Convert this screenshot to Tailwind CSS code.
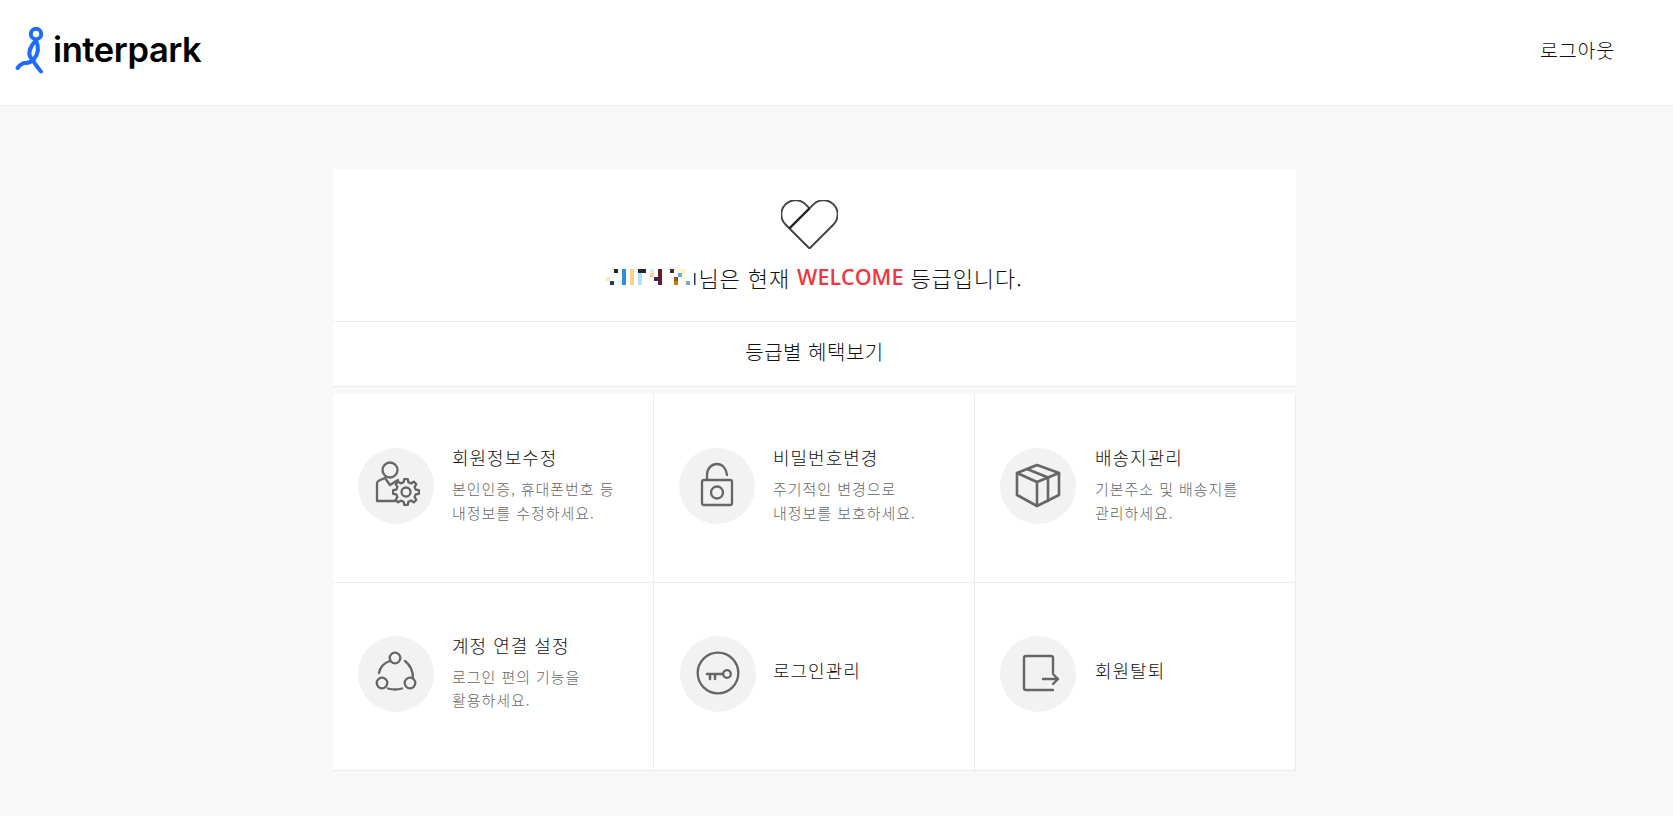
<!DOCTYPE html>
<html lang="ko"><head><meta charset="utf-8"><script src="https://cdn.jsdelivr.net/npm/@tailwindcss/browser@4"></script></head>
<body class="bg-[#f8f8f8] font-['Noto_Sans_CJK_KR','Noto_Sans',sans-serif] font-light text-[#111] overflow-hidden">
<div class="h-[816px] flex flex-col">
<header class="h-[106px] shrink-0 bg-white border-b border-[#ececec] flex items-center justify-between pl-[14px] pr-[58px]">
  <div class="flex items-center h-[60px] -mt-[3px]">
    <svg width="32" height="48" viewBox="0 0 32 48" fill="none" stroke="#1b6cff" stroke-linecap="round" stroke-linejoin="round" stroke-width="4" class="mr-[8px]"><circle cx="22" cy="7" r="5.2"/><path d="M22 13C16 20 13 26 17 31C20 35 23 40 27 44.5"/><path d="M22 13C25 20 25 26 20 32C17 35 15 36 12 36C9 35.5 7 36.5 3.5 41"/></svg>
    <span class="font-['Inter',sans-serif] font-semibold text-[34.5px] leading-none tracking-[-0.4px] text-black -mt-[2px] -ml-[1px]">interpark</span>
  </div>
  <span class="text-[19.5px] tracking-[0.8px] leading-none -mt-[6px]">로그아웃</span>
</header>
<main class="w-[963px] ml-[333px] mt-[63px]">
  <section class="bg-white h-[153px] border-b border-[#ececec] flex flex-col items-center pt-[31px]">
    <svg width="57" height="49" viewBox="0 0 58 50" fill="none" stroke="#444" stroke-width="2" stroke-linejoin="round" class="-ml-[11px]"><path d="M29 49.5L4.75 25.25A14.5 14.5 0 1 1 25.25 4.75L29 8.5L32.75 4.75A14.5 14.5 0 1 1 53.25 25.25Z"/><path d="M29 8.5L8.5 29" stroke="#222" stroke-width="2.3"/></svg>
    <div class="flex items-center mt-[12px] h-[32px] text-[22px] tracking-[0.9px] leading-none">
      <svg width="92" height="20" viewBox="608 266 92 20" class="shrink-0">
        <rect x="612" y="268" width="4" height="4" fill="#fff8e6"/><rect x="616" y="268" width="4" height="4" fill="#222"/><rect x="608" y="276" width="4" height="4" fill="#fde9c0"/><rect x="612" y="280" width="4" height="4" fill="#263a66"/><rect x="620" y="280" width="4" height="4" fill="#d8fbff"/><rect x="624" y="268" width="4" height="16" fill="#2a8fdb"/><rect x="632" y="268" width="4" height="16" fill="#ffcf8c"/><rect x="640" y="268" width="8" height="4" fill="#26262c"/><rect x="640" y="272" width="4" height="12" fill="#a8e3ff"/><rect x="652" y="268" width="4" height="4" fill="#c4f3fa"/><rect x="652" y="272" width="4" height="4" fill="#ffcf96"/><rect x="656" y="276" width="4" height="4" fill="#28286e"/><rect x="660" y="268" width="4" height="16" fill="#641e28"/><rect x="672" y="268" width="4" height="4" fill="#5c222c"/><rect x="680" y="268" width="8" height="4" fill="#fff4c8"/><rect x="676" y="276" width="4" height="4" fill="#98501e"/><rect x="676" y="280" width="4" height="4" fill="#c47a18"/><rect x="680" y="272" width="4" height="4" fill="#5eaee8"/><rect x="684" y="272" width="4" height="12" fill="#fffde6"/><rect x="688" y="280" width="4" height="4" fill="#7ea6cc"/><rect x="696" y="272" width="1.5" height="12" fill="#2a3a66"/>
      </svg>
      <span>님은 현재 </span><b class="font-['Open_Sans',sans-serif] font-semibold text-[#f0393f] text-[21.5px] tracking-normal mx-[7px]">WELCOME</b><span>등급입니다.</span>
    </div>
  </section>
  <a class="block bg-white h-[65px] border-b border-[#ececec] text-center text-[20px] tracking-[0.5px] leading-[60px]">등급별 혜택보기</a>
  <section class="mt-[7px] grid grid-cols-[321px_321px_320px] grid-rows-[189px_187px] bg-white w-[963px] border-r border-b border-[#ececec]">
    <div class="border-b border-r border-[#ececec] flex pl-[25px] pt-[54px]">
      <span class="w-[76px] h-[76px] rounded-full bg-[#f2f2f2] shrink-0">
        <svg class="w-full h-full" viewBox="0 0 76 76" fill="none" stroke="#666" stroke-width="2.3" stroke-linejoin="round" stroke-linecap="round"><circle cx="32" cy="22" r="7.5"/><path d="M27 30L32 37L40 32M27 30L21 32.5Q19 33.5 19 35.5V53H38"/><polygon fill="#f2f2f2" transform="translate(48 44)" points="9.7,-2.4 12.9,-1.8 12.9,1.8 9.7,2.4 8.57,5.15 10.4,7.8 7.8,10.4 5.15,8.57 2.4,9.7 1.8,12.9 -1.8,12.9 -2.4,9.7 -5.15,8.57 -7.8,10.4 -10.4,7.8 -8.57,5.15 -9.7,2.4 -12.9,1.8 -12.9,-1.8 -9.7,-2.4 -8.57,-5.15 -10.4,-7.8 -7.8,-10.4 -5.15,-8.57 -2.4,-9.7 -1.8,-12.9 1.8,-12.9 2.4,-9.7 5.15,-8.57 7.8,-10.4 10.4,-7.8 8.57,-5.15"/><circle cx="48" cy="44" r="4.5"/></svg>
      </span>
      <div class="ml-[18px] -mt-[4px]"><h3 class="text-[18px] tracking-[1px] leading-[26px] font-light">회원정보수정</h3><p class="mt-[7px] text-[15px] tracking-[0.95px] leading-[24px] text-[#666]">본인인증, 휴대폰번호 등<br>내정보를 수정하세요.</p></div>
    </div>
    <div class="border-b border-r border-[#ececec] flex pl-[25px] pt-[54px]">
      <span class="w-[76px] h-[76px] rounded-full bg-[#f2f2f2] shrink-0">
        <svg class="w-full h-full" viewBox="0 0 76 76" fill="none" stroke="#666" stroke-width="2.3" stroke-linejoin="round" stroke-linecap="round"><path d="M28 32V27C28 20 33 16 38 16C43 16 47 20 48 27"/><rect x="23" y="32" width="30" height="25" rx="2"/><circle cx="38" cy="44.5" r="6"/></svg>
      </span>
      <div class="ml-[18px] -mt-[4px]"><h3 class="text-[18px] tracking-[1px] leading-[26px] font-light">비밀번호변경</h3><p class="mt-[7px] text-[15px] tracking-[0.95px] leading-[24px] text-[#666]">주기적인 변경으로<br>내정보를 보호하세요.</p></div>
    </div>
    <div class="border-b border-[#ececec] flex pl-[25px] pt-[54px]">
      <span class="w-[76px] h-[76px] rounded-full bg-[#f2f2f2] shrink-0">
        <svg class="w-full h-full" viewBox="0 0 76 76" fill="none" stroke="#666" stroke-width="2.6" stroke-linejoin="round" stroke-linecap="round"><path d="M37 17L59 25V47L37 58L17 47V25Z"/><path d="M17 25L37 34L59 25M37 34V58"/><path d="M27 21L48 29.5V53"/></svg>
      </span>
      <div class="ml-[19px] -mt-[4px]"><h3 class="text-[18px] tracking-[1px] leading-[26px] font-light">배송지관리</h3><p class="mt-[7px] text-[15px] tracking-[0.95px] leading-[24px] text-[#666]">기본주소 및 배송지를<br>관리하세요.</p></div>
    </div>
    <div class="border-r border-[#ececec] flex pl-[25px] pt-[53px]">
      <span class="w-[76px] h-[76px] rounded-full bg-[#f2f2f2] shrink-0">
        <svg class="w-full h-full" viewBox="0 0 76 76" fill="none" stroke="#666" stroke-width="2.3" stroke-linecap="round"><circle cx="37" cy="22" r="5.3"/><circle cx="24" cy="47" r="5.3"/><circle cx="52" cy="47" r="5.3"/><path d="M32 25C26 27 22 31 21 37"/><path d="M47 25C52 29 55 35 55 42"/><path d="M30 52.5Q37 54.5 44 52.5"/></svg>
      </span>
      <div class="ml-[18px] -mt-[4px]"><h3 class="text-[18px] tracking-[1px] leading-[26px] font-light">계정 연결 설정</h3><p class="mt-[7px] text-[15px] tracking-[0.95px] leading-[23px] text-[#666]">로그인 편의 기능을<br>활용하세요.</p></div>
    </div>
    <div class="border-r border-[#ececec] flex pl-[26px] pt-[53px]">
      <span class="w-[76px] h-[76px] rounded-full bg-[#f2f2f2] shrink-0">
        <svg class="w-full h-full" viewBox="0 0 76 76" fill="none" stroke="#666" stroke-width="2.3" stroke-linecap="round"><circle cx="38" cy="37" r="20.3"/><circle cx="47" cy="38" r="3.8"/><path d="M27 38H43M30 38V43M35 38V43" stroke-width="2.5"/></svg>
      </span>
      <div class="ml-[17px] mt-[21px]"><h3 class="text-[18px] tracking-[1px] leading-[26px] font-light">로그인관리</h3></div>
    </div>
    <div class="flex pl-[25px] pt-[53px]">
      <span class="w-[76px] h-[76px] rounded-full bg-[#f2f2f2] shrink-0">
        <svg class="w-full h-full" viewBox="0 0 76 76" fill="none" stroke="#666" stroke-width="2.4" stroke-linecap="round" stroke-linejoin="round"><path d="M53 36V22Q53 20 51 20H26Q24 20 24 22V52Q24 54 26 54H53"/><path d="M43 43H58M53 38L58 43L53 48"/></svg>
      </span>
      <div class="ml-[19px] mt-[21px]"><h3 class="text-[18px] tracking-[1px] leading-[26px] font-light">회원탈퇴</h3></div>
    </div>
  </section>
</main>
</div>
</body></html>
